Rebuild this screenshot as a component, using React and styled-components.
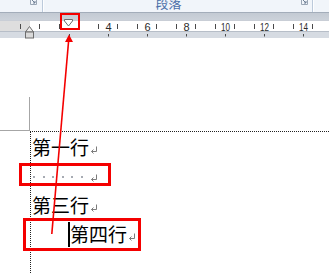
import React from "react";
import styled, { createGlobalStyle } from "styled-components";

const GlobalStyle = createGlobalStyle`
  html, body { margin: 0; padding: 0; background: #fff; }
  body { overflow: hidden; font-family: "Noto Sans CJK SC", "Noto Sans", sans-serif; }
`;

const Screen = styled.div`
  position: relative;
  width: 329px;
  height: 273px;
  overflow: hidden;
  display: flex;
  flex-direction: column;
  background: #fff;
`;

const Ribbon = styled.div`
  height: 12px;
  display: flex;
  background: #f1f5fa;
  overflow: hidden;
`;

const Group = styled.div`
  box-sizing: border-box;
  width: ${(p) => (p.$w ? `${p.$w}px` : "auto")};
  flex: ${(p) => (p.$w ? "none" : "1")};
  display: flex;
  align-items: flex-start;
  justify-content: flex-end;
  border-right: ${(p) => (p.$last ? "none" : "1px solid #bccadb")};
  box-shadow: ${(p) => (p.$last ? "none" : "1px 0 0 #fdfeff")};
  margin-right: ${(p) => (p.$last ? 0 : 1)}px;
`;

const GroupLabel = styled.div`
  flex: 1;
  align-self: flex-end;
  margin-bottom: 3px;
  padding-right: 8px;
  text-align: center;
  font-size: 13px;
  line-height: 13px;
  color: #4a6fa8;
`;

const Launcher = styled.svg`
  flex: none;
  width: 7px;
  height: 5px;
  margin-right: ${(p) => p.$mr}px;
`;

const Band = styled.div`
  height: 8px;
  box-sizing: border-box;
  border-top: 1px solid #a3adba;
  background: linear-gradient(#c3cad3, #ccd2da);
`;

const Ruler = styled.div`
  position: relative;
  height: 18px;
  display: flex;
  flex-direction: column;
`;

const RulerTrack = styled.div`
  height: 12px;
  box-sizing: border-box;
  border-top: 1px solid #c9ced6;
  border-bottom: 1px solid #b7bec8;
  background: linear-gradient(to right, #dedede 0, #dedede 30px, #fff 30px);
`;

const RulerFoot = styled.div`
  flex: 1;
  background: #d6dbe2;
`;

const RulerScale = styled.svg`
  position: absolute;
  left: 0;
  top: 0;
  width: 329px;
  height: 18px;
  overflow: visible;
`;

const Page = styled.div`
  flex: 1;
  display: flex;
  flex-direction: column;
`;

const CropMark = styled.div`
  box-sizing: border-box;
  width: 30px;
  height: 34px;
  margin-top: 59px;
  border-right: 1px solid #a6a6a6;
  border-bottom: 1px solid #a6a6a6;
`;

const TextArea = styled.div`
  flex: 1;
  margin-left: 30px;
  padding-left: 1px;
  border-top: 1px dotted #222;
  border-left: 1px dotted #222;
`;

const Para = styled.div`
  height: 29px;
  display: flex;
  align-items: center;
  padding-left: ${(p) => p.$indent || 0}px;
  font-size: 19px;
  line-height: 29px;
  color: #000;
  white-space: nowrap;
`;

const Caret = styled.span`
  width: 2px;
  height: 25px;
  background: #000;
  margin-top: 1px;
`;

const SpaceCell = styled.span`
  width: 9.5px;
  height: 29px;
  display: flex;
  align-items: center;
  padding-left: 1px;
  box-sizing: border-box;
  &::before {
    content: "";
    width: 2px;
    height: 2px;
    margin-top: 2px;
    background: #a7abb3;
  }
`;

const ReturnMark = styled.svg`
  width: 8px;
  height: 8px;
  margin-left: 1px;
  margin-top: ${(p) => p.$mt ?? 7}px;
  flex: none;
`;

const Annotation = styled.div`
  position: absolute;
  box-sizing: border-box;
  border: ${(p) => p.$bw}px solid #f40000;
`;

const ArrowLayer = styled.svg`
  position: absolute;
  left: 0;
  top: 0;
  width: 329px;
  height: 273px;
  pointer-events: none;
`;

const LauncherIcon = ({ mr }) => (
  <Launcher $mr={mr} viewBox="0 0 7 5">
    <path d="M0.5 0 V4.5 H6.5 V0" fill="none" stroke="#9aa6b5" strokeWidth="1" />
    <path d="M2 0 L5 3 M3 3 H5 V1" fill="none" stroke="#6f7f94" strokeWidth="1" />
  </Launcher>
);

const Ret = ({ mt }) => (
  <ReturnMark $mt={mt} viewBox="0 0 8 8">
    <path d="M6.5 0.5 V5.5 H1.5" fill="none" stroke="#7b7b7b" strokeWidth="1" />
    <path d="M3.5 3.5 L1.5 5.5 L3.5 7.5" fill="none" stroke="#7b7b7b" strokeWidth="1" />
  </ReturnMark>
);

const ORIGIN = 29.5;
const UNIT = 19.5;

function RulerMarks() {
  const ticks = [];
  for (let n = -1; n < 16; n++) {
    const x = Math.round(ORIGIN + UNIT * (n + 0.5)) + 0.5;
    if (x < 0 || x > 329) continue;
    ticks.push(<line key={`t${n}`} x1={x} x2={x} y1={4} y2={9} stroke="#4a4a4a" strokeWidth="1" />);
  }
  const nums = [];
  for (let m = 2; m <= 14; m += 2) {
    const x = Math.round(ORIGIN + UNIT * m);
    if (m > 2) {
      nums.push(
        <text
          key={`n${m}`}
          x={x + 0.5}
          y={10.5}
          textAnchor="middle"
          fontFamily="'Liberation Sans', sans-serif"
          fontSize="11"
          fill="#2b2b2b"
          {...(m >= 10 ? { textLength: 9, lengthAdjust: "spacingAndGlyphs" } : {})}
        >
          {m}
        </text>
      );
    }
    nums.push(<line key={`b${m}`} x1={x + 0.5} x2={x + 0.5} y1={14} y2={16.5} stroke="#4a4a4a" strokeWidth="1" />);
  }
  return (
    <RulerScale viewBox="0 0 329 18">
      {ticks}
      {nums}
      <path d="M25.5 12 L29.5 6.5 L33.5 12 Z" fill="#eeeeee" stroke="#6d6d6d" strokeWidth="1" />
      <rect x="25.5" y="12" width="8" height="6" fill="#d9d9d9" stroke="#6d6d6d" strokeWidth="1" />
      <path d="M64.5 -0.5 H72.5 V1 L68.5 6 L64.5 1 Z" fill="#ffffff" stroke="#6d6d6d" strokeWidth="1" />
    </RulerScale>
  );
}

export default function App() {
  return (
    <>
      <GlobalStyle />
      <Screen>
        <Ribbon>
          <Group $w={43}>
            <LauncherIcon mr={5} />
          </Group>
          <Group $w={269}>
            <GroupLabel>段落</GroupLabel>
            <LauncherIcon mr={4} />
          </Group>
          <Group $last />
        </Ribbon>
        <Band />
        <Ruler>
          <RulerTrack />
          <RulerFoot />
          <RulerMarks />
        </Ruler>
        <Page>
          <CropMark />
          <TextArea>
            <Para>
              第一行
              <Ret />
            </Para>
            <Para>
              {Array.from({ length: 6 }).map((_, i) => (
                <SpaceCell key={i} />
              ))}
              <Ret mt={4} />
            </Para>
            <Para>
              第三行
              <Ret />
            </Para>
            <Para $indent={36}>
              <Caret />
              第四行
              <Ret />
            </Para>
          </TextArea>
        </Page>

        <Annotation $bw={2} style={{ left: 60, top: 13, width: 20, height: 17 }} />
        <Annotation $bw={3} style={{ left: 19, top: 163, width: 92, height: 23 }} />
        <Annotation $bw={3} style={{ left: 23, top: 218, width: 118, height: 33 }} />

        <ArrowLayer viewBox="0 0 329 273">
          <line x1="68.6" y1="41" x2="51.8" y2="234" stroke="#f40000" strokeWidth="1.6" />
          <path d="M69 34.5 L73 42 L65 42 Z" fill="#f40000" />
        </ArrowLayer>
      </Screen>
    </>
  );
}
